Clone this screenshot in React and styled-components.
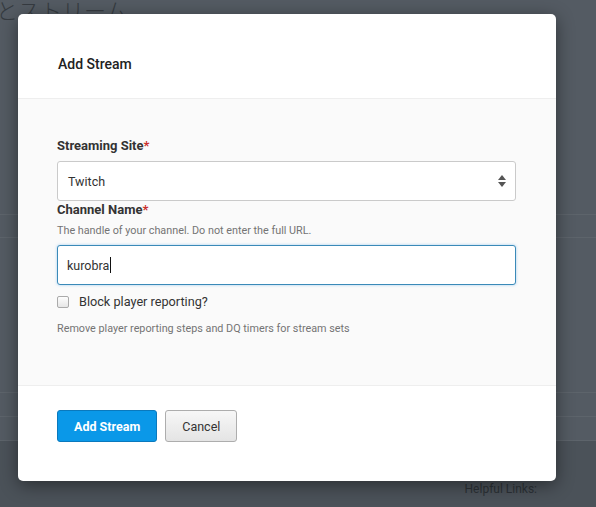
import React from 'react';
import styled, {createGlobalStyle} from 'styled-components';

const Global = createGlobalStyle`
    body {
        margin: 0;
        background: #4b5259;
        font-family: Roboto, "Liberation Sans", Arial, sans-serif;
    }
`;

const Page = styled.div`
    position: relative;
    width: 596px;
    height: 507px;
    overflow: hidden;
    background: #545b63;
`;

const PageTitle = styled.h1`
    margin: -5px 0 0 -4px;
    height: 220px;
    font-family: "Noto Sans CJK JP", Roboto, sans-serif;
    font-weight: 300;
    font-size: 22px;
    line-height: 28px;
    color: #363b41;
    border-bottom: 1px solid #5d646b;
    box-sizing: border-box;
`;

const Row = styled.div`
    height: ${p => p.h}px;
    border-bottom: 1px solid #5d646b;
    box-sizing: border-box;
`;

const PageFooter = styled.div`
    background: #4b5259;
    height: 70px;
    display: flex;
    justify-content: flex-end;
    padding: 41px 59px 0 0;
    box-sizing: border-box;
    color: #2c3136;
    font-size: 12px;
    line-height: 14px;
`;

const Modal = styled.div`
    position: absolute;
    left: 18px;
    top: 14px;
    width: 538px;
    background: #fff;
    border-radius: 5px;
    box-shadow: 0 4px 18px rgba(0, 0, 0, 0.45);
    overflow: hidden;
`;

const Header = styled.div`
    height: 85px;
    box-sizing: border-box;
    padding: 42px 40px 0 40px;
    border-bottom: 1px solid #eeeeee;
`;

const Title = styled.h4`
    margin: 0;
    font-size: 14px;
    line-height: 16px;
    font-weight: 500;
    color: #222;
`;

const Body = styled.div`
    background: #fafafa;
    height: 287px;
    box-sizing: border-box;
    padding: 38px 40px 0 39px;
    border-bottom: 1px solid #eeeeee;
`;

const Label = styled.label`
    display: block;
    font-size: 13px;
    line-height: 17px;
    font-weight: 700;
    color: #333;
    margin-bottom: ${p => p.gap || 0}px;
`;

const Star = styled.span`
    color: #c9302c;
`;

const Help = styled.div`
    font-size: 10.8px;
    line-height: 14px;
    color: #747474;
    margin: ${p => p.m};
`;

const SelectBox = styled.div`
    display: flex;
    align-items: center;
    justify-content: space-between;
    height: 40px;
    box-sizing: border-box;
    padding: 0 8px 0 10px;
    background: #fff;
    border: 1px solid #cacaca;
    border-radius: 3px;
    font-size: 12.5px;
    color: #333;
`;

const Input = styled.div`
    display: flex;
    align-items: center;
    height: 40px;
    box-sizing: border-box;
    padding: 0 9px;
    background: #fff;
    border: 1px solid #3b8ab8;
    border-radius: 3px;
    box-shadow: 0 0 3px rgba(102, 175, 233, 0.6);
    font-size: 12.5px;
    color: #333;
`;

const Caret = styled.span`
    display: inline-block;
    width: 1px;
    height: 16px;
    background: #111;
    margin-left: 1px;
`;

const CheckRow = styled.label`
    display: flex;
    align-items: center;
    gap: 10px;
    margin-top: 9px;
    font-size: 12.7px;
    color: #333;
`;

const Box = styled.span`
    width: 10px;
    height: 10px;
    border: 1px solid #aaa;
    border-radius: 2px;
    background: linear-gradient(#fdfdfd, #e6e6e6);
`;

const Footer = styled.div`
    height: 95px;
    box-sizing: border-box;
    padding: 24px 39px 0;
    display: flex;
    gap: 8px;
    align-items: flex-start;
`;

const Button = styled.button`
    height: 32px;
    padding: 0 16px;
    border-radius: 3px;
    font-family: inherit;
    font-size: 12.5px;
    font-weight: ${p => (p.primary ? 700 : 400)};
    color: ${p => (p.primary ? '#fff' : '#333')};
    border: 1px solid ${p => (p.primary ? '#0a79bd' : '#adadad')};
    background: ${p => (p.primary ? '#0a98e8' : 'linear-gradient(#f7f7f7, #e4e4e4)')};
`;

function Arrows() {
    return (
        <svg width="10" height="14" viewBox="0 0 10 14">
            <path d="M5 1 L9 6 L1 6 Z" fill="#555" />
            <path d="M1 8 L9 8 L5 13 Z" fill="#555" />
        </svg>
    );
}

export default function App() {
    return (
        <Page>
            <Global />
            <PageTitle>とストリーム</PageTitle>
            <Row h={23} />
            <Row h={155} />
            <Row h={24} />
            <Row h={24} />
            <PageFooter>Helpful Links:</PageFooter>

            <Modal>
                <Header>
                    <Title>Add Stream</Title>
                </Header>
                <Body>
                    <Label gap={7}>Streaming Site<Star>*</Star></Label>
                    <SelectBox>
                        <span>Twitch</span>
                        <Arrows />
                    </SelectBox>
                    <Label>Channel Name<Star>*</Star></Label>
                    <Help m="6px 0 7px">The handle of your channel. Do not enter the full URL.</Help>
                    <Input>kurobra<Caret /></Input>
                    <CheckRow>
                        <Box />
                        Block player reporting?
                    </CheckRow>
                    <Help m="13px 0 0">Remove player reporting steps and DQ timers for stream sets</Help>
                </Body>
                <Footer>
                    <Button primary>Add Stream</Button>
                    <Button>Cancel</Button>
                </Footer>
            </Modal>
        </Page>
    );
}
